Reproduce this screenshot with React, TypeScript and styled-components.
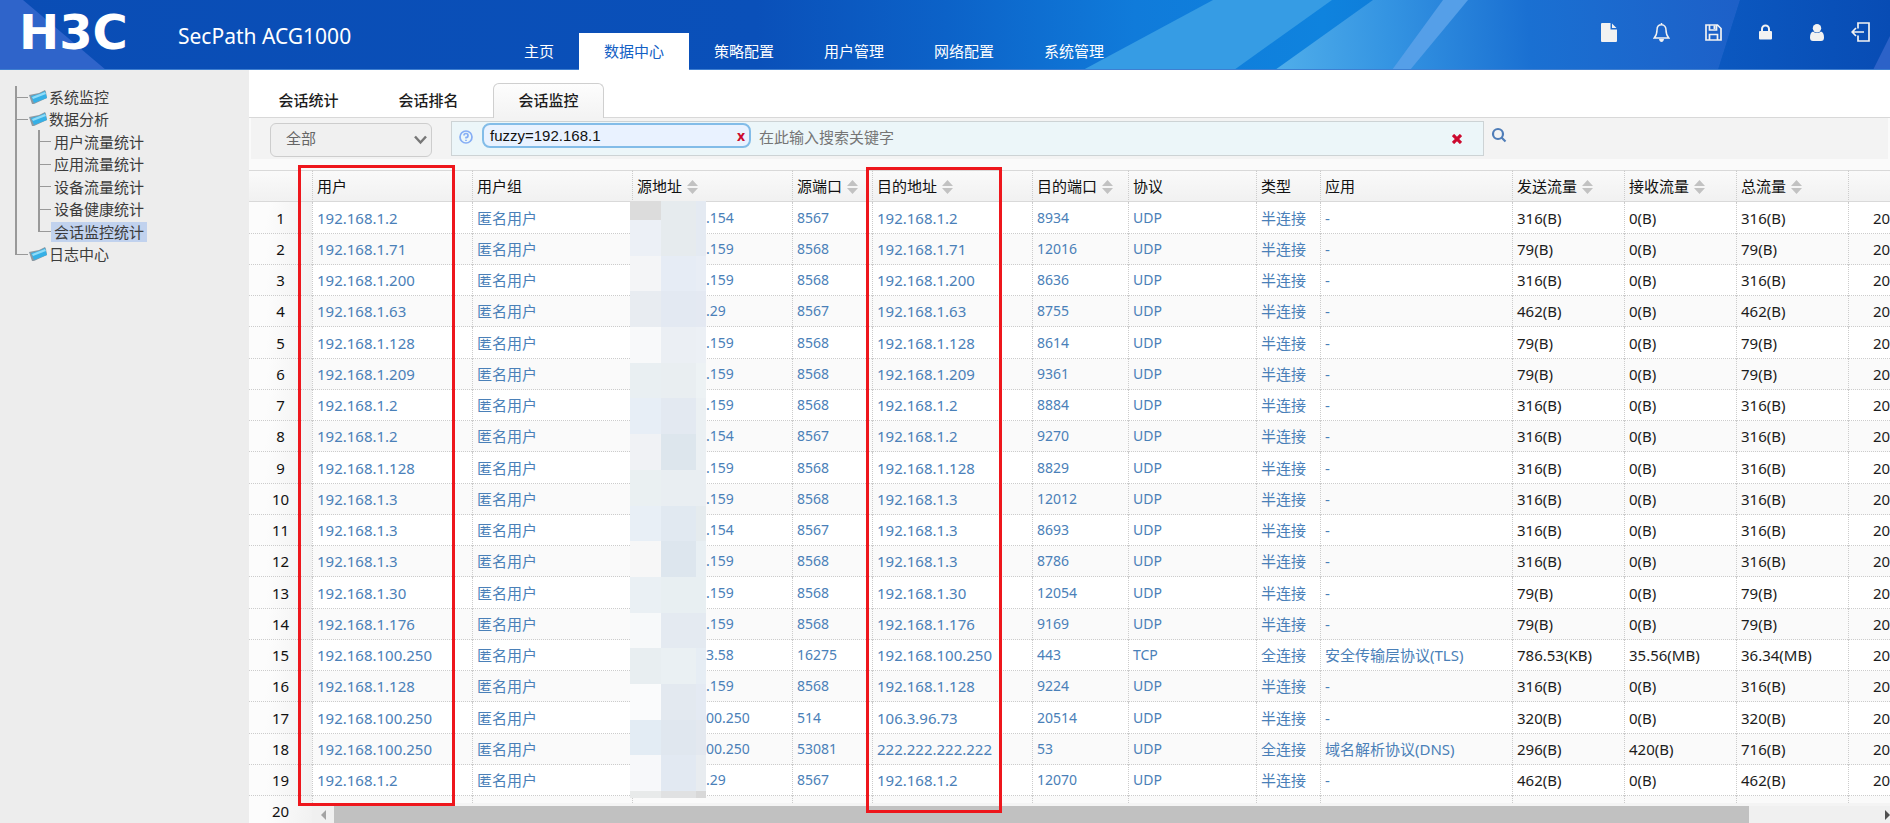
import React from "react";
import styled, { createGlobalStyle } from "styled-components";

const GlobalStyle = createGlobalStyle`
  *, *::before, *::after { box-sizing: border-box; }
  body {
    margin: 0;
    background: #fff;
    color: #1c1c1c;
    font: 15px/20px "Noto Sans", "Noto Sans CJK SC", sans-serif;
  }
  button, input, select { font: inherit; }
  a { color: inherit; text-decoration: none; }
`;

const Page = styled.div`
  height: 100vh;
  display: flex;
  flex-direction: column;
  overflow: hidden;
`;

/* ---------- header ---------- */

const Header = styled.header`
  position: relative;
  display: flex;
  height: 70px;
  flex: none;
  color: #fff;
  background: #0a4db5;
`;

const HeaderArt = styled.svg`
  position: absolute;
  inset: 0;
  width: 100%;
  height: 100%;
`;

const Brand = styled.div`
  position: relative;
  display: flex;
  align-items: center;
  width: 499px;
  padding: 0 0 6px 19px;
`;

const Logo = styled.span`
  width: 159px;
  font: bold 48px/52px "DejaVu Sans", sans-serif;
`;

const Product = styled.span`
  font-size: 21px;
  line-height: 28px;
  padding-top: 8px;
`;

const MainNav = styled.nav`
  position: relative;
  display: flex;
  align-items: flex-end;
`;

const NavItem = styled.a<{ $active?: boolean }>`
  padding: 0 25px;
  line-height: 37px;
  color: ${(p) => (p.$active ? "#1260c4" : "#fff")};
  background: ${(p) => (p.$active ? "#fff" : "transparent")};
`;

const Tools = styled.div`
  position: relative;
  display: flex;
  margin-left: auto;
  padding: 17px 13px 0 0;
  height: 48px;
`;

const ToolButton = styled.button<{ $last?: boolean }>`
  display: flex;
  align-items: center;
  justify-content: center;
  width: ${(p) => (p.$last ? 34 : 52)}px;
  height: 30px;
  padding: 0;
  border: 0;
  background: none;
  color: #f2f2f2;
`;

/* ---------- sidebar ---------- */

const Body = styled.div`
  flex: 1;
  min-height: 0;
  display: flex;
`;

const Sidebar = styled.nav`
  width: 249px;
  flex: none;
  padding: 16px 0 0 15px;
  background: #ededed;
  color: #3c3c3c;
`;

const Tree = styled.ul`
  list-style: none;
  margin: 0;
  padding: 0;
`;

const SubTree = styled(Tree)`
  padding-left: 23px;
  background: linear-gradient(#999, #999) 0 0 / 2px 100% no-repeat;
`;

const TreeRow = styled.div`
  display: flex;
  align-items: center;
  height: 22px;
`;

const SubItem = styled.li`
  &:nth-child(odd) ${TreeRow} { height: 23px; }
`;

const Branch = styled.span<{ $last?: boolean }>`
  flex: none;
  width: 13px;
  height: 100%;
  background:
    linear-gradient(#999, #999) 0 0 / 2px ${(p) => (p.$last ? "50%" : "100%")} no-repeat,
    linear-gradient(#999, #999) 0 50% / 100% 1px no-repeat;
`;

const FolderIcon = styled.svg`
  flex: none;
  width: 21px;
  height: 16px;
`;

const TreeLink = styled.a<{ $current?: boolean }>`
  padding: 0 3px;
  background: ${(p) => (p.$current ? "#c1d2ee" : "transparent")};
`;

const FolderLink = styled.a``;

/* ---------- main column ---------- */

const Main = styled.main`
  flex: 1;
  min-width: 0;
  display: flex;
  flex-direction: column;
  background: #fafafa;
`;

const Tabs = styled.div`
  display: flex;
  align-items: flex-end;
  gap: 9px;
  height: 48px;
  flex: none;
  padding-left: 4px;
  background: #fff;
  border-bottom: 1px solid #d8d8d8;
`;

const Tab = styled.button<{ $active?: boolean }>`
  height: 35px;
  width: 111px;
  margin-bottom: -1px;
  padding: 0 0 2px;
  border: 1px solid ${(p) => (p.$active ? "#cfcfcf" : "transparent")};
  border-bottom: 0;
  border-radius: 6px 6px 0 0;
  background: ${(p) => (p.$active ? "linear-gradient(#fdfdfd, #f3f3f3)" : "none")};
  color: #1c1c1c;
  font-weight: 500;
`;

const FilterBar = styled.form`
  display: flex;
  align-items: flex-start;
  height: 41px;
  flex: none;
  margin: 0 2px 11px;
  padding: 3px 0 0 19px;
  background: #f3f3f3;
`;

const SelectBox = styled.label`
  position: relative;
  display: block;
  margin: 2px 19px 0 0;
  svg { position: absolute; right: 4px; top: 11px; }
`;

const Select = styled.select`
  appearance: none;
  display: block;
  width: 162px;
  height: 34px;
  padding: 0 15px 4px;
  border: 1px solid #cdcdcd;
  border-radius: 6px;
  background: #f0f0f0;
  color: #666;
`;

const SearchBox = styled.div`
  display: flex;
  align-items: flex-start;
  flex: 0 1 1033px;
  height: 35px;
  padding: 1px 21px 0 7px;
  border: 1px solid #cdd3d5;
  background: #ecf6f9;
`;

const HelpButton = styled.button`
  padding: 7px 0 0;
  width: 23px;
  border: 0;
  background: none;
  text-align: left;
  line-height: 0;
`;

const Token = styled.span`
  display: flex;
  align-items: center;
  justify-content: space-between;
  width: 269px;
  height: 25px;
  padding: 0 4px 0 6px;
  border: 2px solid #82bce8;
  border-radius: 8px;
  background: #e9f2ff;
  color: #111;
  font-family: "Liberation Sans", sans-serif;
`;

const RemoveToken = styled.button`
  padding: 0;
  border: 0;
  background: none;
  color: #cc0a2f;
  font: bold 14px/18px "Noto Sans", sans-serif;
`;

const SearchInput = styled.input`
  flex: 1;
  min-width: 0;
  height: 28px;
  padding: 0 8px;
  border: 0;
  background: none;
  outline: 0;
  color: #222;
  &::placeholder { color: #757575; opacity: 1; }
`;

const PlainButton = styled.button`
  padding: 0;
  border: 0;
  background: none;
  line-height: 0;
`;

const ClearButton = styled(PlainButton)`
  padding-top: 11px;
`;

const SearchButton = styled(PlainButton)`
  padding: 6px 0 0 7px;
`;

/* ---------- grid ---------- */

const Grid = styled.section`
  position: relative;
  flex: 1;
  min-height: 0;
  display: flex;
  align-items: stretch;
`;

const NumberPane = styled.div`
  width: 63px;
  flex: none;
  overflow: hidden;
`;

const DataPane = styled.div`
  flex: 1;
  min-width: 0;
  display: flex;
  flex-direction: column;
`;

const TableClip = styled.div`
  flex: 1;
  min-height: 0;
  overflow: hidden;
`;

const Table = styled.table<{ $width: number }>`
  width: ${(p) => p.$width}px;
  table-layout: fixed;
  border-collapse: separate;
  border-spacing: 0;
`;

const HeadCell = styled.th`
  height: 32px;
  padding: 0 4px;
  border-top: 1px solid #d9d9d9;
  border-bottom: 1px solid #d9d9d9;
  border-left: 1px dotted #ccc;
  background: linear-gradient(#fafafa, #f1f1f1);
  color: #111;
  font-weight: 400;
  text-align: left;
  white-space: nowrap;
`;

const NumberHead = styled(HeadCell)`
  border-left: 0;
`;

const Row = styled.tr`
  height: 31px;
  background: #fff;
  &:nth-child(even) { background: #fafafa; }
  &:nth-child(4n + 1) { height: 32px; }
`;

const Cell = styled.td<{ $tone?: "link" | "plain"; $indent?: number; $small?: boolean }>`
  padding: 0 0 0 ${(p) => p.$indent ?? 4}px;
  border-bottom: 1px dotted #ccc;
  border-left: 1px dotted #ccc;
  color: ${(p) => (p.$tone === "plain" ? "#1c1c1c" : "#4a80b8")};
  font-size: ${(p) => (p.$small ? 14 : 15)}px;
  white-space: nowrap;
`;

const NumberCell = styled.th`
  padding: 0;
  border-bottom: 1px dotted #ccc;
  background: linear-gradient(100deg, #fcfcfc 30%, #f1f1f1);
  color: #111;
  font-size: 15px;
  font-weight: 400;
  text-align: center;
`;

const SortIcon = styled.svg`
  width: 11px;
  height: 14px;
  margin-left: 5px;
  vertical-align: -2px;
`;

const ScrollBar = styled.div`
  display: flex;
  align-items: stretch;
  height: 20px;
  flex: none;
  border-top: 3px solid #f4f4f4;
  background: #f0f0f0;
`;

const ScrollArrow = styled(PlainButton)<{ $end?: boolean }>`
  display: flex;
  align-items: center;
  justify-content: ${(p) => (p.$end ? "flex-end" : "center")};
  width: 22px;
`;

const ScrollTrack = styled.div`
  flex: 1;
`;

const ScrollThumb = styled.div`
  width: calc(92% + 4px);
  height: 100%;
  background: #c1c1c1;
`;

const Mosaic = styled.div`
  position: absolute;
  left: 381px;
  top: 31px;
  width: 76px;
  height: 597px;
  display: grid;
  grid-template-columns: 31px 35px 10px;
  grid-template-rows: 19px repeat(16, 1fr) 7px;
`;

const Tile = styled.span<{ $color: string }>`
  background: ${(p) => p.$color};
`;

const Highlight = styled.div<{ $left: number; $top: number; $width: number; $height: number }>`
  position: absolute;
  left: ${(p) => p.$left}px;
  top: ${(p) => p.$top}px;
  width: ${(p) => p.$width}px;
  height: ${(p) => p.$height}px;
  border: 3px solid #ee161c;
  pointer-events: none;
`;

/* ---------- data ---------- */

type Session = [string, string, string, string, string, string, string, string, string, string, string];

// user, source tail, source port, destination, destination port, protocol, type, app, sent, received, total
const sessions: Session[] = [
  ["192.168.1.2", ".154", "8567", "192.168.1.2", "8934", "UDP", "半连接", "-", "316(B)", "0(B)", "316(B)"],
  ["192.168.1.71", ".159", "8568", "192.168.1.71", "12016", "UDP", "半连接", "-", "79(B)", "0(B)", "79(B)"],
  ["192.168.1.200", ".159", "8568", "192.168.1.200", "8636", "UDP", "半连接", "-", "316(B)", "0(B)", "316(B)"],
  ["192.168.1.63", ".29", "8567", "192.168.1.63", "8755", "UDP", "半连接", "-", "462(B)", "0(B)", "462(B)"],
  ["192.168.1.128", ".159", "8568", "192.168.1.128", "8614", "UDP", "半连接", "-", "79(B)", "0(B)", "79(B)"],
  ["192.168.1.209", ".159", "8568", "192.168.1.209", "9361", "UDP", "半连接", "-", "79(B)", "0(B)", "79(B)"],
  ["192.168.1.2", ".159", "8568", "192.168.1.2", "8884", "UDP", "半连接", "-", "316(B)", "0(B)", "316(B)"],
  ["192.168.1.2", ".154", "8567", "192.168.1.2", "9270", "UDP", "半连接", "-", "316(B)", "0(B)", "316(B)"],
  ["192.168.1.128", ".159", "8568", "192.168.1.128", "8829", "UDP", "半连接", "-", "316(B)", "0(B)", "316(B)"],
  ["192.168.1.3", ".159", "8568", "192.168.1.3", "12012", "UDP", "半连接", "-", "316(B)", "0(B)", "316(B)"],
  ["192.168.1.3", ".154", "8567", "192.168.1.3", "8693", "UDP", "半连接", "-", "316(B)", "0(B)", "316(B)"],
  ["192.168.1.3", ".159", "8568", "192.168.1.3", "8786", "UDP", "半连接", "-", "316(B)", "0(B)", "316(B)"],
  ["192.168.1.30", ".159", "8568", "192.168.1.30", "12054", "UDP", "半连接", "-", "79(B)", "0(B)", "79(B)"],
  ["192.168.1.176", ".159", "8568", "192.168.1.176", "9169", "UDP", "半连接", "-", "79(B)", "0(B)", "79(B)"],
  ["192.168.100.250", "3.58", "16275", "192.168.100.250", "443", "TCP", "全连接", "安全传输层协议(TLS)", "786.53(KB)", "35.56(MB)", "36.34(MB)"],
  ["192.168.1.128", ".159", "8568", "192.168.1.128", "9224", "UDP", "半连接", "-", "316(B)", "0(B)", "316(B)"],
  ["192.168.100.250", "00.250", "514", "106.3.96.73", "20514", "UDP", "半连接", "-", "320(B)", "0(B)", "320(B)"],
  ["192.168.100.250", "00.250", "53081", "222.222.222.222", "53", "UDP", "全连接", "域名解析协议(DNS)", "296(B)", "420(B)", "716(B)"],
  ["192.168.1.2", ".29", "8567", "192.168.1.2", "12070", "UDP", "半连接", "-", "462(B)", "0(B)", "462(B)"],
];

const columns: { title: string; width: number; sortable?: boolean }[] = [
  { title: "用户", width: 160 },
  { title: "用户组", width: 160 },
  { title: "源地址", width: 160, sortable: true },
  { title: "源端口", width: 80, sortable: true },
  { title: "目的地址", width: 160, sortable: true },
  { title: "目的端口", width: 96, sortable: true },
  { title: "协议", width: 128 },
  { title: "类型", width: 64 },
  { title: "应用", width: 192 },
  { title: "发送流量", width: 112, sortable: true },
  { title: "接收流量", width: 112, sortable: true },
  { title: "总流量", width: 112, sortable: true },
  { title: "", width: 180 },
];

const tableWidth = columns.reduce((sum, c) => sum + c.width, 0);

const mosaicRows = [
  ["#dcdcdc", "#e6ebee", "#e4eaf2"],
  ["#ecf0f6", "#e6ebee", "#e4eaf2"],
  ["#f4f5f7", "#e6ecf5", "#e8edf5"],
  ["#e8ecf1", "#e3e9f2", "#e4e9f2"],
  ["#f8f9fa", "#ebeff4", "#ecf0f5"],
  ["#e9eff2", "#e9eef1", "#edf2f4"],
  ["#e7eef6", "#e3e9f1", "#ebf0f3"],
  ["#f0f2f5", "#dde6ed", "#ebf0f3"],
  ["#eaf0f2", "#e9eef2", "#e9eef2"],
  ["#e8eff6", "#e1e9f1", "#e5ebee"],
  ["#f7f7f7", "#dde6ee", "#e8eff3"],
  ["#eaf0f4", "#e8eff2", "#e8eff2"],
  ["#f7f9fa", "#e4eaf1", "#e4eaf1"],
  ["#e8eef1", "#eaf0f3", "#e6edf4"],
  ["#fafbfc", "#e3e9f0", "#e4eaf3"],
  ["#e3ecf4", "#e0e7ef", "#e3e8ef"],
  ["#f7f8fa", "#e2e9f2", "#e8ecf0"],
  ["#e8eaea", "#e0e1e2", "#d8d8d8"],
];

const subPages = ["用户流量统计", "应用流量统计", "设备流量统计", "设备健康统计", "会话监控统计"];
const navItems = ["主页", "数据中心", "策略配置", "用户管理", "网络配置", "系统管理"];
const tabItems = ["会话统计", "会话排名", "会话监控"];

/* ---------- pieces ---------- */

const Folder = () => (
  <FolderIcon viewBox="0 0 21 16" aria-hidden="true">
    <path d="M1 6 L11 4 L17 1 L18 3 L19 9 L6 15 L4 15 Z" fill="#8d9aa3" />
    <path d="M3 7 L11 5 L17 2 L19 9 L6 14 Z" fill="#36b0e6" />
    <path d="M4 8 L17 3 L18 5 L5 10 Z" fill="#8fdcf8" />
  </FolderIcon>
);

const Sort = () => (
  <SortIcon viewBox="0 0 11 14" aria-hidden="true">
    <path d="M5.500 0 L11 6 H0 Z M0 8 H11 L5.500 14 Z" fill="#c2c2c2" />
  </SortIcon>
);

const Backdrop = () => (
  <HeaderArt viewBox="0 0 1890 70" preserveAspectRatio="none" aria-hidden="true">
    <defs>
      <linearGradient id="base" x1="0" x2="1">
        <stop offset="0" stopColor="#0a4db5" />
        <stop offset="0.4" stopColor="#0a50b9" />
        <stop offset="0.5" stopColor="#0c62c8" />
        <stop offset="0.6" stopColor="#107bda" />
        <stop offset="0.7" stopColor="#0f83de" />
        <stop offset="1" stopColor="#0a4db5" />
      </linearGradient>
      <linearGradient id="glow" gradientUnits="userSpaceOnUse" x1="1275" y1="70" x2="1740" y2="30">
        <stop offset="0" stopColor="#50aeea" />
        <stop offset="0.25" stopColor="#3494e2" />
        <stop offset="0.55" stopColor="#1a70d2" />
        <stop offset="1" stopColor="#1d60c8" />
      </linearGradient>
      <linearGradient id="dark" x1="0" x2="1">
        <stop offset="0" stopColor="#0b58c0" />
        <stop offset="1" stopColor="#084cb4" />
      </linearGradient>
    </defs>
    <rect width="1890" height="70" fill="url(#base)" />
    <path d="M0 0 H23 L106 70 H0 Z" fill="#2f64ca" />
    <path d="M1213 0 H1332 L1234 70 H1083 Z" fill="#369ce4" />
    <path d="M1373 0 H1740 L1718 70 H1275 Z" fill="url(#glow)" />
    <path d="M1443 0 H1468 L1410 70 H1392 Z" fill="#559fe8" />
    <path d="M1740 0 H1890 V70 H1718 Z" fill="url(#dark)" />
    <path d="M1890 36 V70 H1873 Z" fill="#2c62c8" />
    <rect y="69" width="1890" height="1" fill="#3f7fd0" />
  </HeaderArt>
);

const tools = [
  {
    label: "文档",
    icon: (
      <svg width="16" height="19" viewBox="0 0 16 19" fill="currentColor">
        <path d="M1 0 H9.500 V6.500 H16 V18 Q16 19 15 19 H1 Q0 19 0 18 V1 Q0 0 1 0 Z M11 0.500 L15.500 5 H11 Z" />
      </svg>
    ),
  },
  {
    label: "告警",
    icon: (
      <svg width="17" height="19" viewBox="0 0 17 19" fill="none" stroke="currentColor" strokeWidth="1.500">
        <path d="M8.500 1.800 C5.300 1.800 4 4.300 4 7 C4 11 3 13 1.200 15 H15.800 C14 13 13 11 13 7 C13 4.300 11.700 1.800 8.500 1.800 Z M8.500 0 V2" />
        <path d="M6 16 H11 Q10.500 19 8.500 19 Q6.500 19 6 16 Z" fill="currentColor" stroke="none" />
      </svg>
    ),
  },
  {
    label: "保存",
    icon: (
      <svg width="17" height="17" viewBox="0 0 17 17" fill="none" stroke="currentColor" strokeWidth="1.700">
        <path d="M1 1 H12.500 L16 4.500 V16 H1 Z M4.500 1 V6 H11.500 V1 M4.500 16 V10.500 H12.500 V16" />
        <path d="M8.500 1.500 H10.500 V5 H8.500 Z" fill="currentColor" stroke="none" />
      </svg>
    ),
  },
  {
    label: "锁定",
    icon: (
      <svg width="13" height="16" viewBox="0 0 13 16">
        <path d="M3 8 V5 A3.500 3.500 0 0 1 10 5 V8" fill="none" stroke="currentColor" strokeWidth="2" />
        <rect y="7" width="13" height="8.500" rx="1" fill="currentColor" />
      </svg>
    ),
  },
  {
    label: "用户",
    icon: (
      <svg width="14" height="17" viewBox="0 0 14 17" fill="currentColor">
        <circle cx="7" cy="4.200" r="4.200" />
        <path d="M3 7.500 Q7 10.500 11 7.500 Q14 8.500 14 13.500 Q14 17 11 17 H3 Q0 17 0 13.500 Q0 8.500 3 7.500 Z" />
      </svg>
    ),
  },
  {
    label: "退出",
    icon: (
      <svg width="19" height="20" viewBox="0 0 19 20" fill="none" stroke="currentColor" strokeWidth="1.700">
        <path d="M7 6.500 V1 H18 V19 H7 V13.500 M13 10 H1.500 M5 6 L1.200 10 L5 14" />
      </svg>
    ),
  },
];

export default function App() {
  return (
    <Page>
      <GlobalStyle />
      <Header>
        <Backdrop />
        <Brand>
          <Logo>H3C</Logo>
          <Product>SecPath ACG1000</Product>
        </Brand>
        <MainNav>
          {navItems.map((item) => (
            <NavItem key={item} href="#" $active={item === "数据中心"}>{item}</NavItem>
          ))}
        </MainNav>
        <Tools>
          {tools.map((t, i) => (
            <ToolButton key={t.label} type="button" aria-label={t.label} $last={i === tools.length - 1}>
              {t.icon}
            </ToolButton>
          ))}
        </Tools>
      </Header>

      <Body>
        <Sidebar>
          <Tree>
            <li>
              <TreeRow><Branch /><Folder /><FolderLink href="#">系统监控</FolderLink></TreeRow>
            </li>
            <li>
              <TreeRow><Branch /><Folder /><FolderLink href="#">数据分析</FolderLink></TreeRow>
              <SubTree>
                {subPages.map((name, i) => (
                  <SubItem key={name}>
                    <TreeRow>
                      <Branch $last={i === subPages.length - 1} />
                      <TreeLink href="#" $current={name === "会话监控统计"}>{name}</TreeLink>
                    </TreeRow>
                  </SubItem>
                ))}
              </SubTree>
            </li>
            <li>
              <TreeRow><Branch $last /><Folder /><FolderLink href="#">日志中心</FolderLink></TreeRow>
            </li>
          </Tree>
        </Sidebar>

        <Main>
          <Tabs role="tablist">
            {tabItems.map((name) => (
              <Tab key={name} type="button" role="tab" aria-selected={name === "会话监控"} $active={name === "会话监控"}>
                {name}
              </Tab>
            ))}
          </Tabs>

          <FilterBar onSubmit={(e) => e.preventDefault()}>
            <SelectBox>
              <Select aria-label="类别" defaultValue="all">
                <option value="all">全部</option>
              </Select>
              <svg width="15" height="12" viewBox="0 0 15 12" fill="none" stroke="#777" strokeWidth="2.500" aria-hidden="true">
                <path d="M2 2.500 L7.500 8.500 L13 2.500" />
              </svg>
            </SelectBox>
            <SearchBox>
              <HelpButton type="button" aria-label="帮助">
                <svg width="14" height="14" viewBox="0 0 14 14" fill="none" stroke="#86aef5" strokeWidth="1.700">
                  <circle cx="7" cy="7" r="6" />
                  <path d="M5 5.500 A2 2 0 1 1 7 7.500 V8.600 M7 9.700 V11" />
                </svg>
              </HelpButton>
              <Token>
                fuzzy=192.168.1
                <RemoveToken type="button" aria-label="移除">x</RemoveToken>
              </Token>
              <SearchInput aria-label="搜索" placeholder="在此输入搜索关键字" />
              <ClearButton type="button" aria-label="清除">
                <svg width="10" height="10" viewBox="0 0 10 10" stroke="#cc0a2f" strokeWidth="3.200">
                  <path d="M1 1 L9 9 M9 1 L1 9" />
                </svg>
              </ClearButton>
            </SearchBox>
            <SearchButton type="submit" aria-label="查询">
              <svg width="16" height="16" viewBox="0 0 16 16" fill="none" stroke="#4f7db8" strokeWidth="2.200">
                <circle cx="7" cy="7" r="5" />
                <path d="M10.500 10.500 L14.500 14.500" />
              </svg>
            </SearchButton>
          </FilterBar>

          <Grid>
            <NumberPane>
              <Table $width={63}>
                <thead><tr><NumberHead /></tr></thead>
                <tbody>
                  {Array.from({ length: 20 }, (_, i) => (
                    <Row key={i}><NumberCell scope="row">{i + 1}</NumberCell></Row>
                  ))}
                </tbody>
              </Table>
            </NumberPane>
            <DataPane>
              <TableClip>
                <Table $width={tableWidth}>
                  <colgroup>
                    {columns.map((c, i) => <col key={i} width={c.width} />)}
                  </colgroup>
                  <thead>
                    <tr>
                      {columns.map((c, i) => (
                        <HeadCell key={i} scope="col">{c.title}{c.sortable && <Sort />}</HeadCell>
                      ))}
                    </tr>
                  </thead>
                  <tbody>
                    {sessions.map(([user, src, sport, dst, dport, proto, kind, app, sent, recv, total], i) => (
                      <Row key={i}>
                        <Cell><a href="#">{user}</a></Cell>
                        <Cell>匿名用户</Cell>
                        <Cell $small $indent={73}>{src}</Cell>
                        <Cell $small>{sport}</Cell>
                        <Cell>{dst}</Cell>
                        <Cell $small>{dport}</Cell>
                        <Cell $small>{proto}</Cell>
                        <Cell>{kind}</Cell>
                        <Cell>{app}</Cell>
                        <Cell $tone="plain">{sent}</Cell>
                        <Cell $tone="plain">{recv}</Cell>
                        <Cell $tone="plain">{total}</Cell>
                        <Cell $tone="plain" $indent={24}>20</Cell>
                      </Row>
                    ))}
                    <Row>{columns.map((_, i) => <Cell key={i} />)}</Row>
                  </tbody>
                </Table>
              </TableClip>
              <ScrollBar>
                <ScrollArrow type="button" aria-label="向左滚动">
                  <svg width="5" height="10" viewBox="0 0 5 10"><path d="M5 0 V10 L0 5 Z" fill="#a3a3a3" /></svg>
                </ScrollArrow>
                <ScrollTrack><ScrollThumb /></ScrollTrack>
                <ScrollArrow type="button" aria-label="向右滚动" $end>
                  <svg width="5" height="10" viewBox="0 0 5 10"><path d="M0 0 V10 L5 5 Z" fill="#505050" /></svg>
                </ScrollArrow>
              </ScrollBar>
            </DataPane>
            <Mosaic aria-hidden="true">
              {mosaicRows.flatMap((row, r) => row.map((color, c) => <Tile key={`${r}-${c}`} $color={color} />))}
            </Mosaic>
            <Highlight $left={49} $top={-5} $width={157} $height={641} />
            <Highlight $left={617} $top={-3} $width={136} $height={646} />
          </Grid>
        </Main>
      </Body>
    </Page>
  );
}
